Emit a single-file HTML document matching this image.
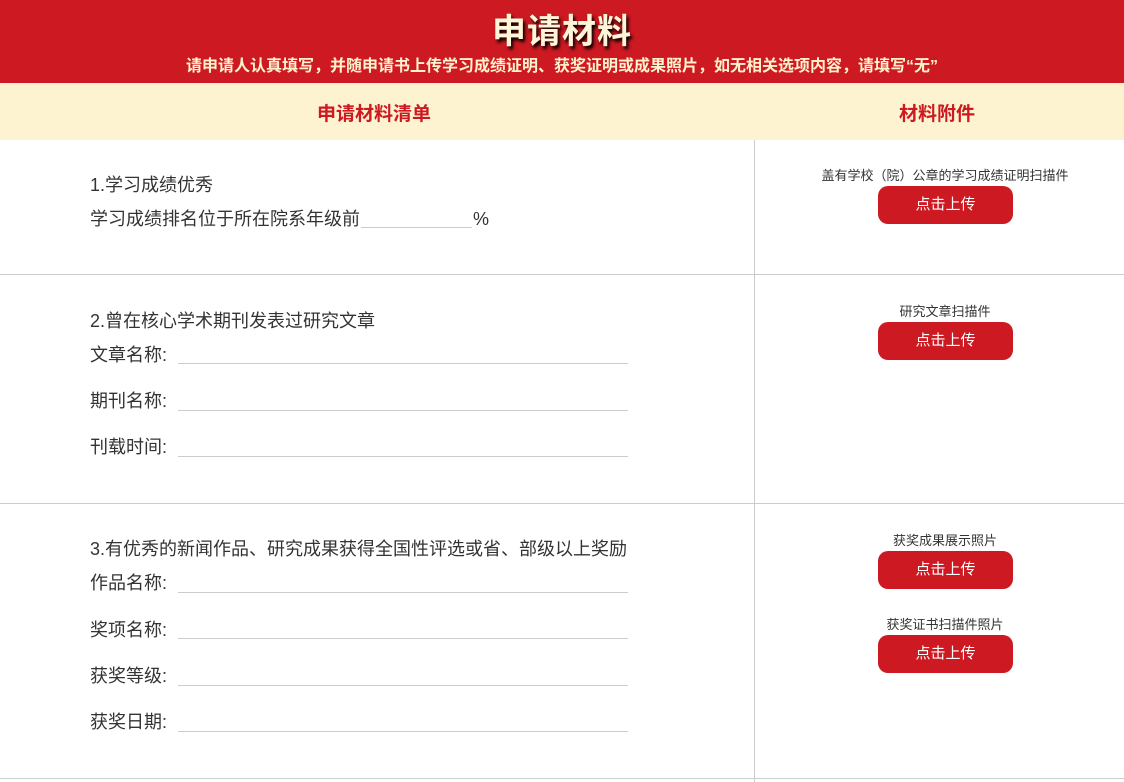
<!DOCTYPE html>
<html><head><meta charset="utf-8"><style>
*{margin:0;padding:0;box-sizing:border-box}
body{width:1124px;height:782px;overflow:hidden;background:#fff;font-family:"Liberation Sans","Noto Sans CJK SC",sans-serif;position:relative;color:#333}
.a{position:absolute;white-space:nowrap}
.hdr{position:absolute;left:0;top:0;width:1124px;height:83px;background:#cd1921}
.t1{left:0;width:1124px;text-align:center;top:4px;font-size:34px;font-weight:bold;color:#fff5d8;text-shadow:2px 3px 3px #000;letter-spacing:1px}
.t2{left:0;width:1124px;text-align:center;top:52px;font-size:16px;font-weight:bold;color:#fff3cf}
.cream{position:absolute;left:0;top:83px;width:1124px;height:57px;background:#fdf3d0}
.h{top:99px;font-size:19px;font-weight:bold;color:#cd1921}
.vl{position:absolute;left:754px;top:140px;width:1px;height:642px;background:#ccc}
.hl{position:absolute;left:0;width:1124px;height:1px;background:#ccc}
.tx{font-size:18px;color:#333;line-height:22px}
.ul{position:absolute;height:1px;background:#ccc}
.lab{font-size:13px;color:#333;left:755px;width:380px;text-align:center}
.btn{position:absolute;left:878px;width:135px;height:38px;background:#cd1921;border-radius:10px;color:#fff;font-size:15px;text-align:center;line-height:38px}
</style></head><body>
<div class="hdr"></div>
<div class="a t1">申请材料</div>
<div class="a t2">请申请人认真填写，并随申请书上传学习成绩证明、获奖证明或成果照片，如无相关选项内容，请填写“无”</div>
<div class="cream"></div>
<div class="a h" style="left:317px">申请材料清单</div>
<div class="a h" style="left:899px">材料附件</div>
<div class="vl"></div>
<div class="hl" style="top:274px"></div>
<div class="hl" style="top:503px"></div>
<div class="hl" style="top:778px"></div>

<div class="a tx" style="left:90px;top:174px">1.学习成绩优秀</div>
<div class="a tx" style="left:90px;top:208px">学习成绩排名位于所在院系年级前</div>
<div class="ul" style="left:361px;top:227px;width:111px"></div>
<div class="a tx" style="left:473px;top:208px">%</div>

<div class="a tx" style="left:90px;top:310px">2.曾在核心学术期刊发表过研究文章</div>
<div class="a tx" style="left:90px;top:344px">文章名称:</div>
<div class="ul" style="left:178px;top:363px;width:450px"></div>
<div class="a tx" style="left:90px;top:390px">期刊名称:</div>
<div class="ul" style="left:178px;top:410px;width:450px"></div>
<div class="a tx" style="left:90px;top:436px">刊载时间:</div>
<div class="ul" style="left:178px;top:456px;width:450px"></div>

<div class="a tx" style="left:90px;top:538px">3.有优秀的新闻作品、研究成果获得全国性评选或省、部级以上奖励</div>
<div class="a tx" style="left:90px;top:572px">作品名称:</div>
<div class="ul" style="left:178px;top:592px;width:450px"></div>
<div class="a tx" style="left:90px;top:619px">奖项名称:</div>
<div class="ul" style="left:178px;top:638px;width:450px"></div>
<div class="a tx" style="left:90px;top:665px">获奖等级:</div>
<div class="ul" style="left:178px;top:685px;width:450px"></div>
<div class="a tx" style="left:90px;top:711px">获奖日期:</div>
<div class="ul" style="left:178px;top:731px;width:450px"></div>

<div class="a lab" style="top:165px">盖有学校（院）公章的学习成绩证明扫描件</div>
<div class="btn" style="top:186px">点击上传</div>
<div class="a lab" style="top:301px">研究文章扫描件</div>
<div class="btn" style="top:322px">点击上传</div>
<div class="a lab" style="top:530px">获奖成果展示照片</div>
<div class="btn" style="top:551px">点击上传</div>
<div class="a lab" style="top:614px">获奖证书扫描件照片</div>
<div class="btn" style="top:635px">点击上传</div>
</body></html>
